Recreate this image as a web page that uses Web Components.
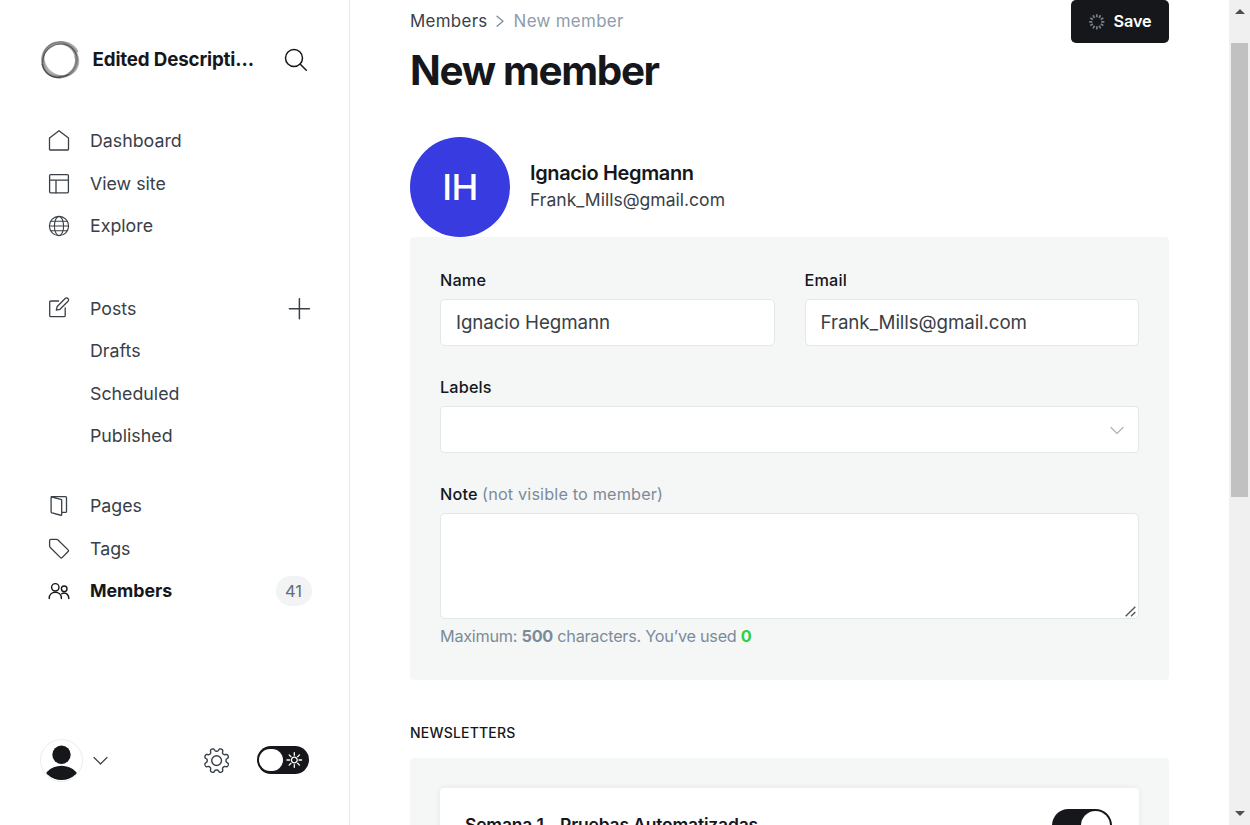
<!DOCTYPE html>
<html lang="en">
<head>
<meta charset="utf-8">
<title>New member</title>
<style>
html,body{margin:0;height:100%;overflow:hidden}
body{font-family:Inter,"Liberation Sans",sans-serif;color:#15171a;background:#fff}
</style>
</head>
<body>
<admin-app></admin-app>
<script>
const define = (name, html, setup) => {
  const template = document.createElement('template');
  template.innerHTML = html;
  customElements.define(name, class extends HTMLElement {
    constructor() {
      super();
      this.attachShadow({mode: 'open'}).append(template.content.cloneNode(true));
    }
    connectedCallback() { if (setup) setup(this, this.shadowRoot); }
  });
};

const rays = (n, r1, r2) => Array.from({length: n}, (_, i) => {
  const a = i * 2 * Math.PI / n;
  return `M${(Math.cos(a) * r1).toFixed(2)} ${(Math.sin(a) * r1).toFixed(2)}L${(Math.cos(a) * r2).toFixed(2)} ${(Math.sin(a) * r2).toFixed(2)}`;
}).join('');

const icons = {
  home: [22, 22, '<path d="M1.5 8v11.2q0 .8.8.8h17.4q.8 0 .8-.8V8L11 .7z"/>'],
  layout: [22, 22, '<rect x="1.6" y="2.6" width="18.8" height="18.2" rx="1"/><path d="M1.6 8.1h18.8M8 8.1v12.7"/>'],
  globe: [22, 22, '<g stroke-width="1.1"><circle cx="11" cy="11" r="9.6"/><ellipse cx="11" cy="11" rx="4.6" ry="9.6"/><path d="M1.4 11h19.2M2.8 6.2h16.4M2.8 15.8h16.4"/></g>'],
  posts: [22, 22, '<path d="M10.6 4H2.9q-1.2 0-1.2 1.2v13.2q0 1.2 1.2 1.2H16q1.2 0 1.2-1.2v-7.6"/><path d="M8.3 13.1l.9-3.6 8-8a1.95 1.95 0 0 1 2.8 2.8l-8 8z"/>'],
  pages: [22, 22, '<path d="M3.1 1.8l9.7 2.6q.9.25.9 1.1v14q0 1-1 .75l-8.6-2.35q-1-.3-1-1.2V2.5q0-.9.9-.9h13.6q.9 0 .9.9v14q0 .9-.9.9h-3.9"/>'],
  tags: [22, 22, '<path transform="translate(0 .7)" d="M1.6 2.7q0-1.1 1.1-1.1h5.6q1 0 1.7.7l10.1 9.9q.9.8 0 1.6l-6 6.1q-.8.8-1.6 0L2.3 9.8q-.7-.7-.7-1.7z"/>'],
  members: [22, 22, '<g stroke-width="1.4"><circle cx="7.3" cy="7.3" r="3.7"/><circle cx="16.2" cy="8.8" r="2.8"/><path d="M1.2 18.5c0-8.3 12.2-8.3 12.2 0M13.6 13.8c3.2-1.8 7.2 0 7.2 4.7"/></g>'],
  search: [24, 24, '<g stroke-width="1.5"><circle cx="10" cy="10" r="8.5"/><path d="M16.3 16.3l6 6"/></g>'],
  plus: [22, 22, '<path stroke-width="1.5" d="M11.4 1.7v20M1.4 11.7h20"/>'],
  down: [16, 10, '<path stroke-width="1.2" d="M2 1.5l6.5 6.5 6.5-6.5"/>'],
  pick: [14, 10, '<path stroke-width="1.2" d="M1 2.5l6 6 6-6"/>'],
  right: [8, 12, '<path d="M1 1.2l6 5-6 5"/>'],
  gear: [26, 26, '<g transform="translate(12.6 12.6)" stroke-width="1.4"><circle r="4.9"/><path d="GEAR"/></g>'],
  sun: [16, 16, `<g transform="translate(8.3 8)" stroke-width="1.3"><circle r="2.9"/><path d="${rays(8, 4.7, 7.3)}"/></g>`],
  spinner: [16, 16, `<g transform="translate(7.8 7.8)" stroke-width="1.7" stroke-linecap="butt"><path d="${rays(12, 4.5, 7.6)}"/></g>`]
};
/* Eight rounded teeth traced in polar form. */
icons.gear[2] = icons.gear[2].replace('GEAR', Array.from({length: 160}, (_, i) => {
  const a = i * Math.PI / 80, wave = Math.cos(8 * (a + Math.PI / 8));
  const r = 10.9 - 1.5 * Math.tanh(2 * wave) / Math.tanh(2), t = a + Math.PI / 8;
  return `${i ? 'L' : 'M'}${(r * Math.cos(t)).toFixed(2)} ${(r * Math.sin(t)).toFixed(2)}`;
}).join('') + 'z');

define('ui-icon', `<style>:host{display:block;flex:none;line-height:0}svg{display:block;overflow:visible}</style><div></div>`, (el, root) => {
  const [w, h, body] = icons[el.getAttribute('name')];
  root.querySelector('div').innerHTML = `<svg width="${w}" height="${h}" viewBox="0 0 ${w} ${h}" fill="none" stroke="currentColor" stroke-width="1.3" stroke-linecap="round" stroke-linejoin="round">${body}</svg>`;
});

define('nav-item', `<style>
:host{display:flex;align-items:center;height:42.5px;box-sizing:border-box;padding:0 37px 0 48px;color:#394047;font-size:17.8px}
.icon{width:22px;margin-right:20px;flex:none}
.label{flex:1;white-space:nowrap}
:host([active]){color:#15171a;font-weight:700;letter-spacing:-.05px}
</style><div class="icon"><slot name="icon"></slot></div><div class="label"><slot></slot></div><slot name="end"></slot>`);

define('count-badge', `<style>
:host{display:flex;align-items:center;justify-content:center;width:36px;height:30px;border-radius:15px;background:#f1f3f4;color:#626d79;font-size:16.5px;font-weight:400}
span{margin-right:1px}
</style><span><slot></slot></span>`);

define('toggle-switch', `<style>
:host{display:flex;flex:none;align-items:center;justify-content:space-between;box-sizing:border-box;width:52px;height:28px;border-radius:17px;background:#15171a;color:#fff;padding:0 7px 0 2px}
i{width:23.5px;height:22.5px;border-radius:12px;background:#fff}
:host([on]){width:60px;height:33px;padding:0 2px;justify-content:flex-end}
:host([on]) i{width:29px;height:29px;border-radius:50%}
</style><i></i><slot></slot>`);

define('site-logo', `<style>:host{display:block;flex:none}svg{display:block}</style>
<svg width="40" height="40" viewBox="0 0 40 40" fill="none">
<circle cx="19.5" cy="20" r="17" stroke="#a2a2a2" stroke-width="3"/>
<ellipse cx="20.3" cy="18.8" rx="18" ry="16.3" stroke="#555" stroke-opacity=".45" stroke-width="1.8" transform="rotate(38 20 20)"/>
<ellipse cx="19.3" cy="20.4" rx="17.6" ry="16.2" stroke="#222" stroke-opacity=".55" stroke-width="1.1" transform="rotate(-35 20 20)"/>
<path d="M2.2 24C3 33 12 38 21 37.5" stroke="#333" stroke-opacity=".55" stroke-width="1.4"/>
<path d="M17 3.3c7-3 17 1 20.5 9M35.5 16c2.5 8-1 14-7 18" stroke="#888" stroke-opacity=".7" stroke-width="2.4"/>
</svg>`);

define('user-avatar', `<style>:host{display:block;flex:none}svg{display:block}</style>
<svg width="43" height="43" viewBox="0 0 43 43"><defs><clipPath id="c"><circle cx="21.5" cy="21" r="20.1"/></clipPath></defs>
<circle cx="21.5" cy="21.5" r="21" fill="#fff" stroke="#e9ecee"/>
<g clip-path="url(#c)" fill="#15171a"><circle cx="21.5" cy="15.8" r="9.2"/><circle cx="21.5" cy="47" r="20.3"/></g></svg>`);

define('side-bar', `<style>
:host{display:flex;flex-direction:column;flex:none;box-sizing:border-box;width:350px;height:825px;border-right:1px solid #e5e9ed;background:#fff}
header{display:flex;align-items:center;padding:40px 41px 0 40px;height:40px}
header b{flex:1;margin:0 0 2px 12.5px;font-size:18.75px;font-weight:700;letter-spacing:-.16px;white-space:nowrap}
nav{margin-top:39.4px}
.group{margin-bottom:40px}
.group.tight{margin-bottom:27.5px}
footer{margin-top:auto;display:flex;align-items:center;padding:0 40px 43px;height:43px;color:#394047}
.caret{margin-left:9px;flex:1}
.gear{margin-right:27px}
toggle-switch{margin-bottom:1px}
</style>
<header><site-logo></site-logo><b>Edited Descripti…</b><ui-icon name="search"></ui-icon></header>
<nav>
<div class="group">
<nav-item><ui-icon slot="icon" name="home"></ui-icon>Dashboard</nav-item>
<nav-item><ui-icon slot="icon" name="layout"></ui-icon>View site</nav-item>
<nav-item><ui-icon slot="icon" name="globe"></ui-icon>Explore</nav-item>
</div>
<div class="group tight">
<nav-item><ui-icon slot="icon" name="posts"></ui-icon>Posts<ui-icon slot="end" name="plus" style="margin-right:2px"></ui-icon></nav-item>
<nav-item>Drafts</nav-item><nav-item>Scheduled</nav-item><nav-item>Published</nav-item>
</div>
<div>
<nav-item><ui-icon slot="icon" name="pages"></ui-icon>Pages</nav-item>
<nav-item><ui-icon slot="icon" name="tags"></ui-icon>Tags</nav-item>
<nav-item active><ui-icon slot="icon" name="members"></ui-icon>Members<count-badge slot="end">41</count-badge></nav-item>
</div>
</nav>
<footer><user-avatar></user-avatar><ui-icon class="caret" name="down"></ui-icon><ui-icon class="gear" name="gear"></ui-icon><toggle-switch><ui-icon name="sun"></ui-icon></toggle-switch></footer>`);

define('save-button', `<style>
:host{display:flex;align-items:center;box-sizing:border-box;width:98px;height:43px;padding-left:17.5px;border-radius:5px;background:#15171a;color:#fff;font-size:16.25px;font-weight:600;gap:9px}
ui-icon{color:#7b8087}
span{margin-bottom:1px;letter-spacing:-.1px}
</style><ui-icon name="spinner"></ui-icon><span><slot></slot></span>`);

define('page-head', `<style>
:host{display:flex;justify-content:space-between;align-items:flex-start;height:137px}
.crumbs{display:flex;align-items:center;height:21px;margin-top:10.5px;font-size:16.9px;line-height:21px;letter-spacing:.32px;color:#394047}
.crumbs ui-icon{margin:0 9.5px 0 8.5px;color:#7c8b9a}
.crumbs em{font-style:normal;color:#8e9cac}
h1{margin:14.5px 0 0;font-size:40.4px;line-height:50px;font-weight:700;letter-spacing:-1.32px;white-space:nowrap}
</style>
<div><div class="crumbs"><span>Members</span><ui-icon name="right"></ui-icon><em>New member</em></div><h1>New member</h1></div>
<save-button>Save</save-button>`);

define('member-card', `<style>
:host{display:flex;align-items:center;height:100px;gap:20px}
.avatar{display:flex;align-items:center;justify-content:center;width:100px;height:100px;border-radius:50%;background:#373be0;color:#fff;font-size:36px;font-weight:500;letter-spacing:-.6px}
.text{margin-bottom:2px}
.name{font-size:20px;font-weight:600;line-height:27px;letter-spacing:-.36px}
.mail{font-size:17.55px;line-height:26px;color:#394047}
</style><div class="avatar">IH</div><div class="text"><div class="name"><slot name="name"></slot></div><div class="mail"><slot name="mail"></slot></div></div>`);

define('form-field', `<style>
:host{display:block}
.label{height:32px;line-height:26px;font-size:16.25px;font-weight:500;letter-spacing:.15px;white-space:nowrap}
.label slot::slotted(*){color:#7c8b9a;font-weight:400}
.box{display:flex;align-items:center;box-sizing:border-box;height:47px;border:1px solid #e3e7e9;border-radius:5px;background:#fff;padding:0 15px;font-size:18.75px;letter-spacing:-.1px;color:#394047}
:host([multiline]) .box{height:106px;align-items:flex-end;justify-content:flex-end;padding:0 2px 1px}
:host([select]) .box{justify-content:flex-end;padding-right:14px;color:#abb4be;border-radius:4px}
</style><div class="label"><slot name="label"></slot></div><div class="box"><slot></slot></div>`, (el, root) => {
  root.querySelector('.label').prepend(el.getAttribute('label') + ' ');
});

define('resize-grip', `<style>:host{display:block}svg{display:block}</style>
<svg width="11" height="11" viewBox="0 0 11 11" stroke="#555" stroke-width="1.4" fill="none"><path d="M.7 10.3l9.6-9.6M6 10.3l4.3-4.3"/></svg>`);

define('ui-panel', `<style>:host{display:block;box-sizing:border-box;background:#f4f7f6;border-radius:4px;padding:30px}</style><slot></slot>`);

define('newsletter-row', `<style>
:host{display:flex;justify-content:space-between;align-items:center;box-sizing:border-box;height:75px;padding:0 27px 0 25px;background:#fff;border-radius:4px;box-shadow:0 0 6px rgba(0,0,0,.07);font-size:17.5px;letter-spacing:-.18px;font-weight:600;white-space:nowrap}
span{margin-bottom:3px}
</style><span><slot></slot></span><toggle-switch on></toggle-switch>`);

define('member-page', `<style>
:host{display:block;flex:1;height:825px;overflow:hidden;box-sizing:border-box;padding:0 60px;min-width:0}
.form{height:443px}
.row{display:grid;grid-template-columns:1fr 1fr;gap:30px;margin-bottom:28px}
.hint{margin-top:4px;font-size:16.25px;letter-spacing:-.27px;line-height:26px;color:#7c8b9a;white-space:nowrap}
.hint b{font-weight:700}.hint .used{color:#30cf43}
h4{margin:42px 0 14px;font-size:14px;line-height:22px;font-weight:500;letter-spacing:.2px}
</style>
<page-head></page-head>
<member-card><span slot="name">Ignacio Hegmann</span><span slot="mail">Frank_Mills@gmail.com</span></member-card>
<ui-panel class="form">
<div class="row"><form-field label="Name">Ignacio Hegmann</form-field><form-field label="Email">Frank_Mills@gmail.com</form-field></div>
<form-field label="Labels" select style="margin-bottom:28px"><ui-icon name="pick"></ui-icon></form-field>
<form-field label="Note" multiline><span slot="label">(not visible to member)</span><resize-grip></resize-grip></form-field>
<div class="hint">Maximum: <b>500</b> characters. You’ve used <b class="used">0</b></div>
</ui-panel>
<h4>NEWSLETTERS</h4>
<ui-panel><newsletter-row>Semana 1 - Pruebas Automatizadas</newsletter-row></ui-panel>`);

define('scroll-rail', `<style>
:host{display:flex;flex-direction:column;flex:none;width:21px;height:825px;background:#f0f0f0;align-items:center}
i{display:block;width:0;height:0;border:5px solid transparent}
.up{border-top:0;border-bottom-color:#505050;margin:9px 0 29px}
.thumb{width:17px;height:454px;background:#c1c1c1}
.down{border-bottom:0;border-top-color:#505050;margin:auto 0 9px}
</style><i class="up"></i><div class="thumb"></div><i class="down"></i>`);

define('admin-app', `<style>:host{display:flex;width:1250px;height:825px;overflow:hidden}</style>
<side-bar></side-bar><member-page></member-page><scroll-rail></scroll-rail>`);
</script>
</body>
</html>
